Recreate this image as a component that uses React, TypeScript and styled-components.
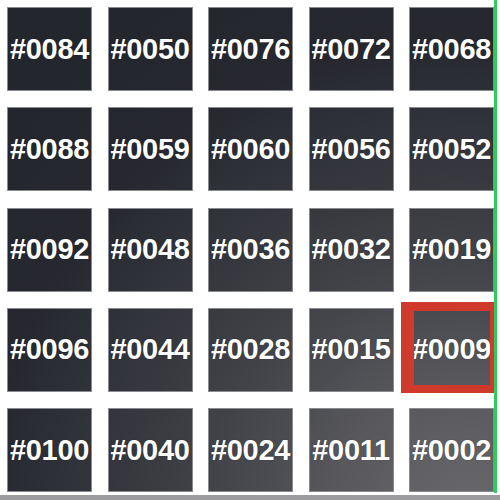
import React from "react";
import styled, { createGlobalStyle } from "styled-components";

const Global = createGlobalStyle`
  html, body { margin: 0; padding: 0; background: #ffffff; }
  body { width: 500px; height: 500px; overflow: hidden; font-family: "Liberation Sans", Arial, sans-serif; }
`;

const Page = styled.div`
  width: 500px;
  height: 500px;
  display: flex;
  flex-direction: column;
  background: #ffffff;
`;

const Main = styled.div`
  display: flex;
  height: 493px;
`;

const Grid = styled.div`
  display: grid;
  grid-template-columns: repeat(5, 85px);
  grid-auto-rows: 84px;
  column-gap: 15.5px;
  row-gap: 16.3px;
  padding: 7px 0 0 7px;
  width: 487px;
`;

const Tile = styled.div`
  position: relative;
  box-sizing: border-box;
  border: 1px solid #8a8b90;
  background-image: radial-gradient(
    circle 640px at 470px 520px,
    #69686b 0px,
    #616064 70px,
    #58585c 140px,
    #4c4d52 200px,
    #414247 270px,
    #38393f 340px,
    #2e3038 420px,
    #27282f 480px,
    #24262e 600px
  );
  background-attachment: fixed;
  display: flex;
  align-items: center;
  justify-content: center;
  overflow: visible;
`;

const Label = styled.span`
  color: #ffffff;
  font-family: "Liberation Sans", Arial, sans-serif;
  font-weight: 700;
  font-size: 29px;
  letter-spacing: -0.3px;
  white-space: nowrap;
  line-height: 1;
  text-shadow: 0 0 1px rgba(0, 0, 0, 0.6);
`;

const Highlight = styled.div`
  position: absolute;
  left: -9px;
  top: -7px;
  right: -3px;
  bottom: -2px;
  border-style: solid;
  border-color: #cf3a2c;
  border-width: 9px 6px 8px 13px;
  pointer-events: none;
`;

const GreenBar = styled.div`
  position: relative;
  z-index: 2;
  width: 3px;
  height: 493px;
  background: #2ecc5a;
`;

const BottomBar = styled.div`
  margin-top: 2px;
  height: 5px;
  background: #9c9c9e;
`;

const rows = [
  ["0084", "0050", "0076", "0072", "0068"],
  ["0088", "0059", "0060", "0056", "0052"],
  ["0092", "0048", "0036", "0032", "0019"],
  ["0096", "0044", "0028", "0015", "0009"],
  ["0100", "0040", "0024", "0011", "0002"],
];

export default function App() {
  return (
    <>
      <Global />
      <Page>
        <Main>
          <Grid>
            {rows.flat().map((id) => (
              <Tile key={id}>
                <Label>#{id}</Label>
                {id === "0009" && <Highlight />}
              </Tile>
            ))}
          </Grid>
          <GreenBar />
        </Main>
        <BottomBar />
      </Page>
    </>
  );
}
